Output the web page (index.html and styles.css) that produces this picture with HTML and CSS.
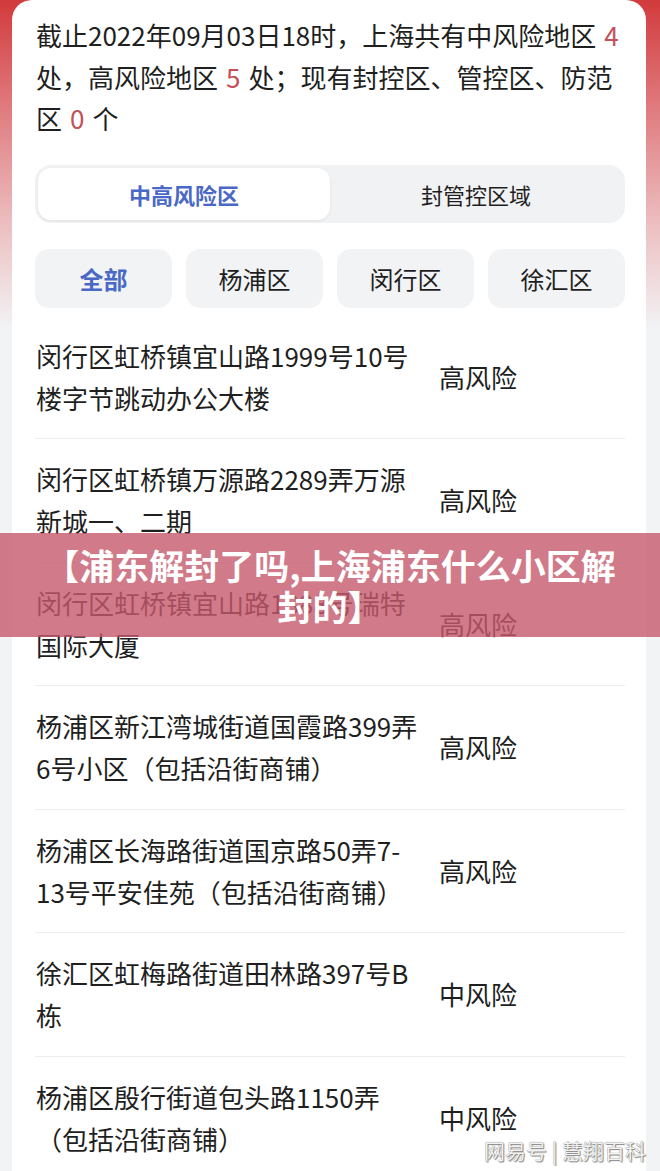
FILE: index.html
```html
<!DOCTYPE html>
<html lang="zh-CN">
<head>
    <meta charset="UTF-8">
    <meta name="viewport" content="width=device-width, initial-scale=1.0">
    <title>上海中高风险区</title>
    <link rel="stylesheet" href="styles.css">
</head>
<body>
    <div class="page">
        <div class="card">
            <p class="summary">
                截止2022年09月03日18时，上海共有中风险地区<span class="num">4</span><br>处，高风险地区<span class="num">5</span>处；现有封控区、管控区、防范<br>区<span class="num">0</span>个
            </p>

            <!-- Tabs -->
            <div class="seg">
                <button class="active">中高风险区</button>
                <button>封管控区域</button>
            </div>

            <div class="districts">
                <button class="active">全部</button>
                <button>杨浦区</button>
                <button>闵行区</button>
                <button>徐汇区</button>
            </div>

            <!-- Risk list -->
            <ul class="list">
                <li>
                    <div class="addr">闵行区虹桥镇宜山路1999号10号<br>楼字节跳动办公大楼</div>
                    <div class="level">高风险</div>
                </li>
                <li>
                    <div class="addr">闵行区虹桥镇万源路2289弄万源<br>新城一、二期</div>
                    <div class="level">高风险</div>
                </li>
                <li>
                    <div class="addr">闵行区虹桥镇宜山路1888号瑞特<br>国际大厦</div>
                    <div class="level">高风险</div>
                </li>
                <li>
                    <div class="addr">杨浦区新江湾城街道国霞路399弄<br>6号小区（包括沿街商铺）</div>
                    <div class="level">高风险</div>
                </li>
                <li>
                    <div class="addr">杨浦区长海路街道国京路50弄7-<br>13号平安佳苑（包括沿街商铺）</div>
                    <div class="level">高风险</div>
                </li>
                <li>
                    <div class="addr">徐汇区虹梅路街道田林路397号B<br>栋</div>
                    <div class="level">中风险</div>
                </li>
                <li>
                    <div class="addr">杨浦区殷行街道包头路1150弄<br>（包括沿街商铺）</div>
                    <div class="level">中风险</div>
                </li>
            </ul>
        </div>

        <div class="banner">【浦东解封了吗,上海浦东什么小区解封的】</div>
        <div class="watermark">网易号 | 慧翔百科</div>
    </div>
</body>
</html>
```

FILE: styles.css
```css
/* General styles */
* {
    margin: 0;
    padding: 0;
    box-sizing: border-box;
}

body {
    font-family: 'Noto Sans CJK SC', 'Noto Sans', sans-serif;
    color: #1f1f1f;
    background: #f2f3f5;
}

.page {
    position: relative;
    height: 100vh;
    overflow: hidden;
    background: linear-gradient(180deg, #d23a3c 0, #e07c80 110px, #ecbcbe 220px, #f2f3f5 330px, #f2f3f5 100%);
}

.card {
    margin: 0 14px 0 12px;
    min-height: 100%;
    background: #fff;
    border-radius: 20px 20px 0 0;
    padding: 14px 21px 0 24px;
}

.summary {
    font-size: 26px;
    line-height: 41.5px;
    white-space: nowrap;
}

.num {
    color: #c4505a;
    margin: 0 8px;
}

/* Tabs */
.seg {
    display: grid;
    grid-template-columns: 1fr 1fr;
    margin: 26px 0 0 -1px;
    padding: 3px;
    height: 58px;
    background: #f1f2f4;
    border-radius: 16px;
}

.seg button,
.districts button {
    border: none;
    background: none;
    font-family: inherit;
    color: #1f1f1f;
}

.seg button {
    font-size: 22px;
    border-radius: 13px;
}

.seg button.active {
    background: #fff;
    color: #4a68c5;
    font-weight: bold;
    box-shadow: 0 1px 3px rgba(0, 0, 0, 0.08);
}

.districts {
    display: grid;
    grid-template-columns: repeat(4, 1fr);
    gap: 14px;
    margin: 26px 0 0 -1px;
}

.districts button {
    height: 59px;
    font-size: 24px;
    background: #f2f3f5;
    border-radius: 14px;
}

.districts button.active {
    color: #4a68c5;
    font-weight: bold;
}

/* Risk list */
.list {
    list-style: none;
    margin-top: 8px;
    margin-left: -1px;
}

.list li {
    display: grid;
    grid-template-columns: 403px 1fr;
    align-items: center;
    padding: 19px 0 19.5px 1px;
    border-bottom: 1px solid #ededee;
    font-size: 26px;
    line-height: 42px;
}

.addr {
    white-space: nowrap;
}

/* Overlay */
.banner {
    position: absolute;
    top: 533px;
    left: 0;
    right: 0;
    height: 104px;
    display: flex;
    align-items: center;
    justify-content: center;
    padding: 0 40px;
    background: rgba(197, 89, 108, 0.8);
    color: #fff;
    font-size: 35px;
    font-weight: bold;
    line-height: 41px;
    text-align: center;
}

.watermark {
    position: absolute;
    right: 14px;
    bottom: 6px;
    font-size: 21px;
    color: #f2f2f2;
    text-shadow: 0 0 1px #666, 1px 1px 1px #888;
}
```
